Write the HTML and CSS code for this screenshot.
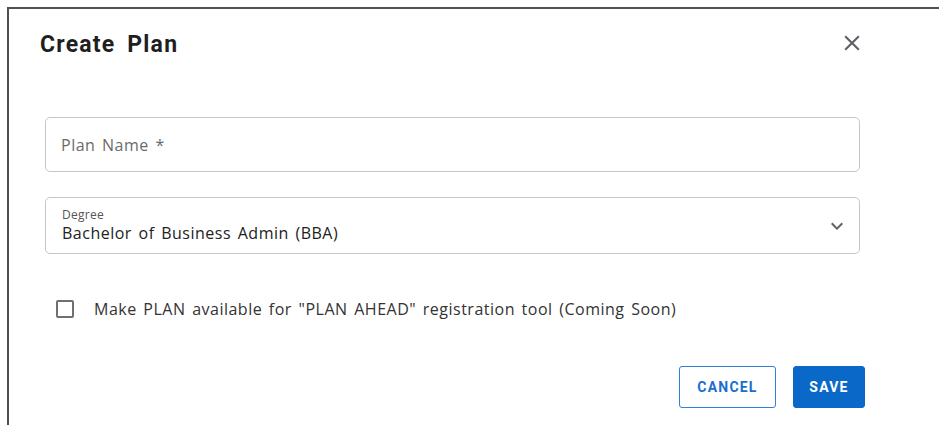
FILE: index.html
```html
<!DOCTYPE html>
<html lang="en">
<head>
<meta charset="utf-8">
<title>Create Plan</title>
<link rel="stylesheet" href="styles.css">
</head>
<body>
<div class="dialog">
  <div class="dialog-header">
    <h2 class="dialog-title">Create Plan</h2>
    <button class="close-btn" type="button" aria-label="Close">
      <svg viewBox="0 0 24 24" width="24" height="24"><path d="M19 6.41 17.59 5 12 10.59 6.41 5 5 6.41 10.59 12 5 17.59 6.41 19 12 13.41 17.59 19 19 17.59 13.41 12z" fill="currentColor"/></svg>
    </button>
  </div>
  <div class="dialog-body">
    <div class="field field-text">
      <span class="placeholder">Plan Name *</span>
    </div>
    <div class="field field-select">
      <div class="select-value">
        <span class="field-label">Degree</span>
        <span class="value">Bachelor of Business Admin (BBA)</span>
      </div>
      <svg class="chevron" viewBox="0 0 24 24" width="24" height="24"><path d="M7.41 8.59 12 13.17l4.59-4.58L18 10l-6 6-6-6z" fill="currentColor"/></svg>
    </div>
    <label class="check-row">
      <span class="checkbox"></span>
      <span class="check-text">Make PLAN available for "PLAN AHEAD" registration tool (Coming Soon)</span>
    </label>
  </div>
  <div class="dialog-actions">
    <button class="btn btn-outline" type="button">Cancel</button>
    <button class="btn btn-primary" type="button">Save</button>
  </div>
</div>
</body>
</html>
```
FILE: styles.css
```css
html, body {
  margin: 0;
  padding: 0;
  background: #fff;
}

body {
  font-family: "Open Sans", "Noto Sans", sans-serif;
  color: #222;
  overflow: hidden;
}

.dialog {
  margin: 7px 0 0 7px;
  height: calc(100vh - 7px);
  box-sizing: border-box;
  border-top: 2px solid #505050;
  border-left: 2px solid #505050;
  background: #fff;
}

.dialog-header {
  display: flex;
  align-items: center;
  justify-content: space-between;
  padding: 22px 74px 0 31px;
}

.dialog-title {
  margin: 0;
  font-family: Roboto, "Liberation Sans", sans-serif;
  font-weight: 700;
  font-size: 23px;
  line-height: 28px;
  letter-spacing: 1.2px;
  word-spacing: 5px;
  color: #1f1f1f;
}

.close-btn {
  display: flex;
  padding: 0;
  border: 0;
  margin-top: -4px;
  background: none;
  color: #5f6368;
  cursor: pointer;
}

.close-btn svg {
  width: 26px;
  height: 26px;
}

.dialog-body {
  display: flex;
  flex-direction: column;
  padding: 58px 79px 0 36px;
}

.field {
  box-sizing: border-box;
  border: 1px solid #c6c6c6;
  border-radius: 5px;
  display: flex;
  align-items: center;
}

.field-text {
  height: 55px;
  padding: 0 15px;
}

.placeholder {
  font-size: 16px;
  letter-spacing: 0.5px;
  word-spacing: 2px;
  color: #6b6b6b;
}

.field-select {
  height: 57px;
  margin-top: 25px;
  padding: 0 10px 0 16px;
  justify-content: space-between;
}

.select-value {
  display: flex;
  flex-direction: column;
  padding-top: 1px;
}

.field-label {
  font-size: 12px;
  line-height: 15px;
  letter-spacing: 0.3px;
  color: #555;
}

.value {
  font-size: 16px;
  line-height: 23px;
  letter-spacing: 0.5px;
  word-spacing: 2px;
  color: #222;
}

.chevron {
  color: #5f6368;
}

.check-row {
  display: flex;
  align-items: center;
  gap: 20px;
  margin-top: 44px;
  padding-left: 11px;
}

.checkbox {
  box-sizing: border-box;
  width: 18px;
  height: 18px;
  border: 2px solid #707070;
  border-radius: 2px;
}

.check-text {
  font-size: 16px;
  letter-spacing: 0.5px;
  word-spacing: 2px;
  color: #333;
}

.dialog-actions {
  display: flex;
  justify-content: flex-end;
  gap: 17px;
  padding: 46px 74px 0 0;
}

.btn {
  box-sizing: border-box;
  height: 42px;
  border-radius: 3px;
  font-family: Roboto, "Liberation Sans", sans-serif;
  font-weight: 700;
  font-size: 14px;
  letter-spacing: 1.2px;
  text-transform: uppercase;
  cursor: pointer;
}

.btn-outline {
  width: 97px;
  border: 1px solid #2f80d6;
  background: #fff;
  color: #1a6fcc;
}

.btn-primary {
  width: 72px;
  border: 1px solid #0a68c8;
  background: #0a68c8;
  color: #fff;
}
```
